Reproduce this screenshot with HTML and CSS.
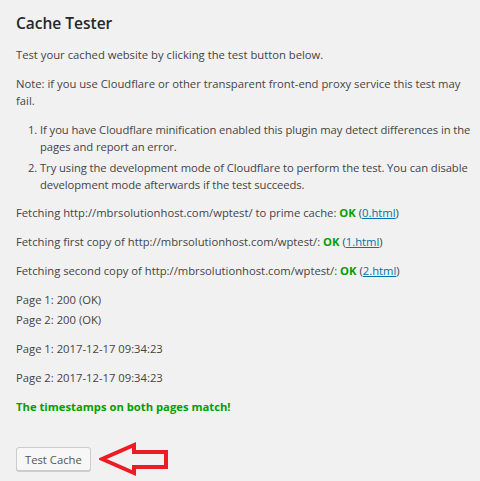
FILE: index.html
```html
<!DOCTYPE html>
<html lang="en">
<head>
    <meta charset="UTF-8">
    <meta name="viewport" content="width=device-width, initial-scale=1.0">
    <title>Cache Tester</title>
    <link rel="stylesheet" href="styles.css">
</head>
<body>

    <div class="wrap">
        <h1>Cache Tester</h1>

        <p>Test your cached website by clicking the test button below.</p>
        <p>Note: if you use Cloudflare or other transparent front-end proxy service this test may fail.</p>

        <ol>
            <li>If you have Cloudflare minification enabled this plugin may detect differences in the pages and report an error.</li>
            <li>Try using the development mode of Cloudflare to perform the test. You can disable development mode afterwards if the test succeeds.</li>
        </ol>

        <p>Fetching http://mbrsolutionhost.com/wptest/ to prime cache: <span class="ok">OK</span> (<a href="#">0.html</a>)</p>
        <p>Fetching first copy of http://mbrsolutionhost.com/wptest/: <span class="ok">OK</span> (<a href="#">1.html</a>)</p>
        <p>Fetching second copy of http://mbrsolutionhost.com/wptest/: <span class="ok">OK</span> (<a href="#">2.html</a>)</p>

        <div class="status">
            <div>Page 1: 200 (OK)</div>
            <div>Page 2: 200 (OK)</div>
        </div>

        <p>Page 1: 2017-12-17 09:34:23</p>
        <p>Page 2: 2017-12-17 09:34:23</p>

        <p class="match">The timestamps on both pages match!</p>

        <div class="actions">
            <button class="button">Test Cache</button>
            <!-- red hand-drawn arrow pointing at the button -->
            <svg class="arrow" width="72" height="36" viewBox="0 0 72 36">
                <path d="M3 18 L35 4 L35 11 L67 11 L67 26 L35 26 L35 32 Z" fill="none" stroke="#ed1c24" stroke-width="4" stroke-linejoin="miter"/>
            </svg>
        </div>
    </div>

</body>
</html>
```

FILE: styles.css
```css
body {
    font-family: "Open Sans", "Noto Sans", sans-serif;
    font-size: 11.25px;
    line-height: 17px;
    color: #444;
    background-color: #f1f1f1;
    margin: 0;
    padding: 0;
}

.wrap {
    padding: 12px 0 0 16px;
}

h1 {
    font-size: 15.5px;
    font-weight: 600;
    color: #23282d;
    margin: 0 0 12px;
    line-height: 22px;
}

p {
    margin: 0 0 12px;
}

ol {
    margin: 0 0 11px;
    padding-left: 24px;
}

ol li {
    margin-bottom: 4px;
    letter-spacing: -0.08px;
}

.ok {
    color: #00a000;
    font-weight: bold;
}

a {
    color: #0073aa;
}

.status {
    margin-bottom: 12px;
}

.status div {
    margin-bottom: 3px;
}

.match {
    color: #00a000;
    font-weight: bold;
    margin-bottom: 26px;
}

.actions {
    display: flex;
    align-items: center;
    gap: 8px;
}

.button {
    font-family: inherit;
    font-size: 11.25px;
    color: #555;
    background-color: #f7f7f7;
    border: 1px solid #ccc;
    border-radius: 3px;
    box-shadow: 0 1px 0 #ccc;
    height: 24px;
    padding: 0 8px;
    cursor: pointer;
}
```
